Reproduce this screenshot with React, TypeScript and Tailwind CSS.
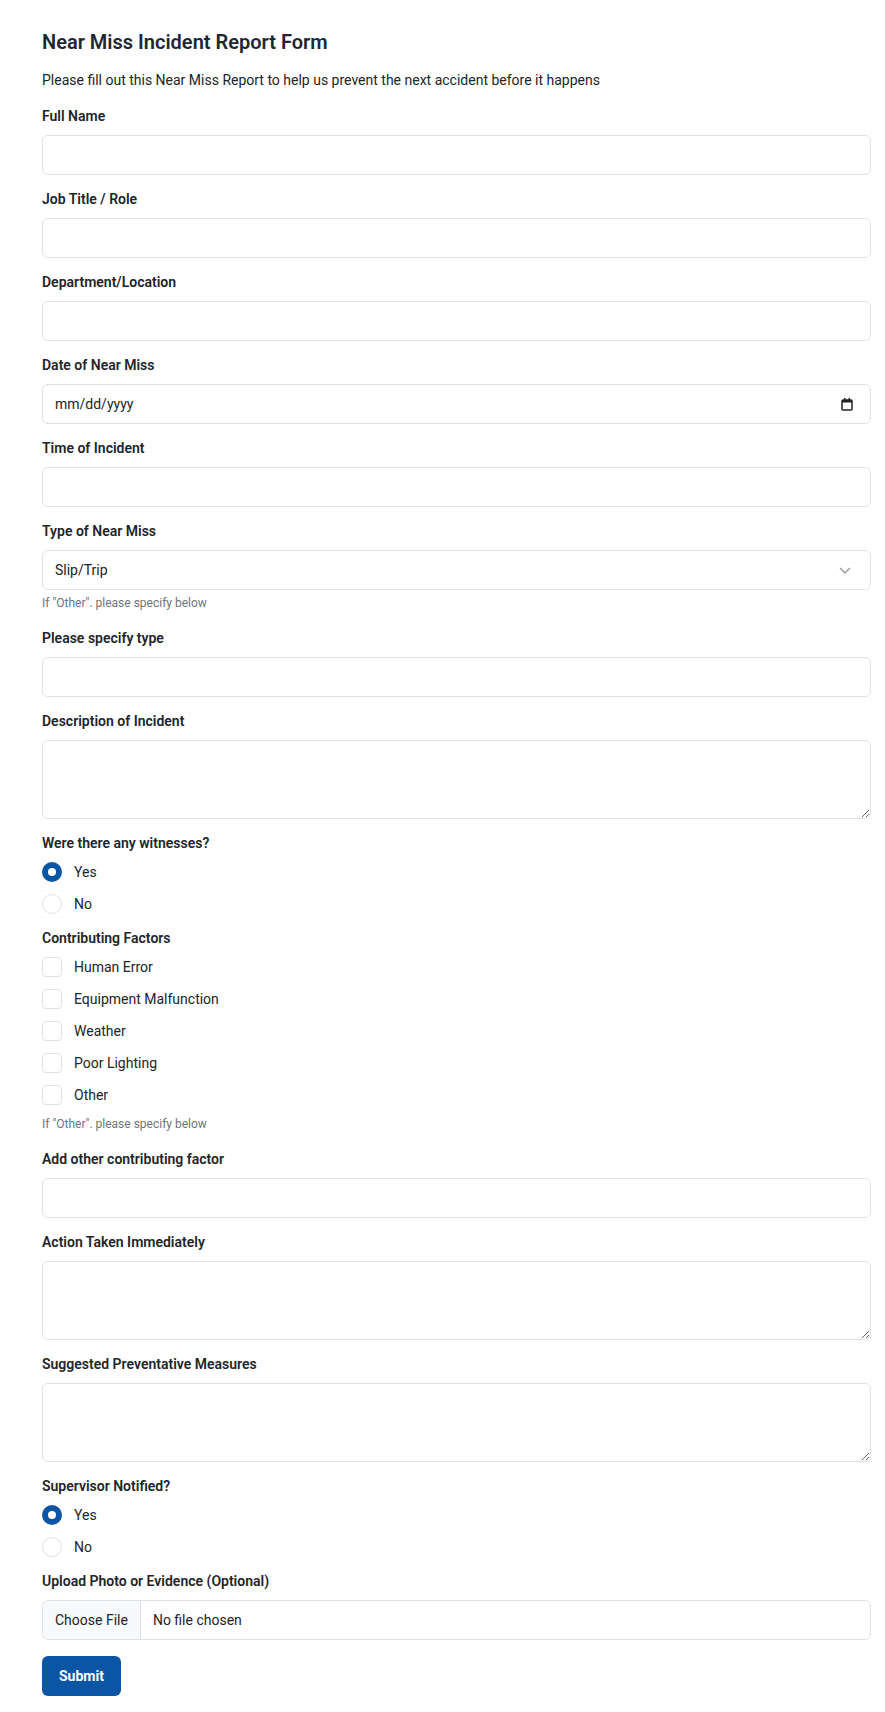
import React from "react";

const inputCls =
  "block w-full h-[40px] px-3 border border-[#dee2e6] rounded-[6px] bg-white text-[14px] text-[#212529] outline-none";

function Label({ children }: { children: React.ReactNode }) {
  return (
    <label className="block h-[21px] leading-[21px] text-[14px] font-semibold text-[#212529] mb-[8px]">
      {children}
    </label>
  );
}

function TextField({ label }: { label: string }) {
  return (
    <div className="mb-[14px]">
      <Label>{label}</Label>
      <input type="text" className={inputCls} />
    </div>
  );
}

function AreaField({ label }: { label: string }) {
  return (
    <div className="mb-[14px]">
      <Label>{label}</Label>
      <textarea className="block w-full h-[79px] px-3 py-[6px] border border-[#dee2e6] rounded-[6px] bg-white text-[14px] outline-none" />
    </div>
  );
}

function Radio({ checked, label }: { checked?: boolean; label: string }) {
  return (
    <div className="flex items-center h-[32px]">
      {checked ? (
        <span className="w-[20px] h-[20px] rounded-full bg-[#0b56a4] flex items-center justify-center">
          <span className="w-[8px] h-[8px] rounded-full bg-white" />
        </span>
      ) : (
        <span className="w-[20px] h-[20px] rounded-full border border-[#dee2e6] bg-white" />
      )}
      <span className="ml-[12px] text-[14px] leading-[21px]">{label}</span>
    </div>
  );
}

function Check({ label }: { label: string }) {
  return (
    <div className="flex items-center h-[32px]">
      <span className="w-[20px] h-[20px] rounded-[4px] border border-[#dee2e6] bg-white" />
      <span className="ml-[12px] text-[14px] leading-[21px]">{label}</span>
    </div>
  );
}

function Helper() {
  return (
    <div className="mt-[4px] mb-[16px] text-[12px] leading-[18px] text-[#6c757d]">
      If "Other". please specify below
    </div>
  );
}

export default function App() {
  return (
    <div className="min-h-screen bg-white text-[#212529] font-['Roboto','Noto_Sans',sans-serif]">
      <div className="pl-[42px] pr-[14px] pt-[30px] pb-[16px]">
        <h1 className="text-[20px] leading-[24px] font-semibold text-[#1f2733]">
          Near Miss Incident Report Form
        </h1>
        <p className="mt-[16px] text-[14px] leading-[21px]">
          Please fill out this Near Miss Report to help us prevent the next accident before it happens
        </p>
        <form className="mt-[15px]" onSubmit={(e) => e.preventDefault()}>
          <TextField label="Full Name" />
          <TextField label="Job Title / Role" />
          <TextField label="Department/Location" />
          <div className="mb-[14px]">
            <Label>Date of Near Miss</Label>
            <div className={inputCls + " flex items-center justify-between"}>
              <span className="text-[14px]">mm/dd/yyyy</span>
              <svg width="14" height="14" viewBox="0 0 14 14" className="mr-[4px]">
                <rect x="2" y="3" width="10" height="10" rx="1" fill="none" stroke="#222" strokeWidth="1.5" />
                <rect x="2" y="3" width="10" height="2.5" fill="#222" />
                <rect x="4" y="1" width="1.5" height="2.5" fill="#222" />
                <rect x="8.5" y="1" width="1.5" height="2.5" fill="#222" />
              </svg>
            </div>
          </div>
          <TextField label="Time of Incident" />
          <div>
            <Label>Type of Near Miss</Label>
            <div className={inputCls + " flex items-center justify-between"}>
              <span className="text-[14px]">Slip/Trip</span>
              <svg width="14" height="10" viewBox="0 0 14 10" className="mr-[6px]">
                <path d="M2 3 L7 8 L12 3" fill="none" stroke="#8a8f96" strokeWidth="1.2" />
              </svg>
            </div>
            <Helper />
          </div>
          <TextField label="Please specify type" />
          <AreaField label="Description of Incident" />
          <div className="mb-[8px]">
            <label className="block h-[21px] leading-[21px] text-[14px] font-semibold mb-[2px]">
              Were there any witnesses?
            </label>
            <Radio checked label="Yes" />
            <Radio label="No" />
          </div>
          <div>
            <label className="block h-[21px] leading-[21px] text-[14px] font-semibold mb-[2px]">
              Contributing Factors
            </label>
            <Check label="Human Error" />
            <Check label="Equipment Malfunction" />
            <Check label="Weather" />
            <Check label="Poor Lighting" />
            <Check label="Other" />
            <Helper />
          </div>
          <TextField label="Add other contributing factor" />
          <AreaField label="Action Taken Immediately" />
          <AreaField label="Suggested Preventative Measures" />
          <div className="mb-[8px]">
            <label className="block h-[21px] leading-[21px] text-[14px] font-semibold mb-[2px]">
              Supervisor Notified?
            </label>
            <Radio checked label="Yes" />
            <Radio label="No" />
          </div>
          <div className="mb-[16px]">
            <Label>Upload Photo or Evidence (Optional)</Label>
            <div className="flex h-[40px] w-full border border-[#dee2e6] rounded-[6px] overflow-hidden bg-white">
              <span className="flex items-center px-[12px] bg-[#f8f9fa] border-r border-[#dee2e6] text-[14px]">
                Choose File
              </span>
              <span className="flex items-center pl-[12px] text-[14px]">No file chosen</span>
            </div>
          </div>
          <button
            type="submit"
            className="h-[40px] px-[17px] rounded-[6px] bg-[#0b56a4] text-white text-[14px] font-bold"
          >
            Submit
          </button>
        </form>
      </div>
    </div>
  );
}
